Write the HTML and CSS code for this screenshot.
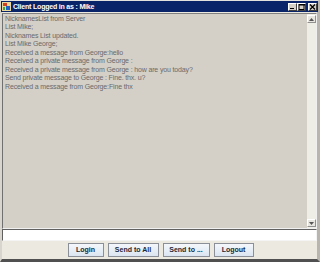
FILE: index.html
```html
<!DOCTYPE html>
<html>
<head>
<meta charset="utf-8">
<link rel="stylesheet" href="styles.css">
</head>
<body>
<div class="window">
  <div class="titlebar">
    <span class="app-icon">
      <svg width="9" height="9" viewBox="0 0 9 9"><rect x="0" y="0" width="9" height="9" fill="#e8d8a0"/><rect x="1" y="1" width="4" height="3" fill="#d04020"/><rect x="4" y="4" width="4" height="4" fill="#2060c0"/><rect x="1" y="5" width="2" height="3" fill="#40a040"/></svg>
    </span>
    <span class="title">Client Logged in as : Mike</span>
    <span class="controls">
      <span class="ctl"><svg width="7" height="6" viewBox="0 0 7 6"><rect x="1" y="4" width="4" height="1" fill="#000"/></svg></span>
      <span class="ctl"><svg width="7" height="6" viewBox="0 0 7 6"><rect x="1" y="0.5" width="5" height="5" fill="none" stroke="#000" stroke-width="1"/><rect x="1" y="0" width="6" height="1.5" fill="#000"/></svg></span>
      <span class="ctl close"><svg width="7" height="6" viewBox="0 0 7 6"><path d="M1 0.5 L6 5.5 M6 0.5 L1 5.5" stroke="#000" stroke-width="1.3"/></svg></span>
    </span>
  </div>
  <div class="scrollpane">
    <div class="log">
      <div>NicknamesList from Server</div>
      <div>List Mike;</div>
      <div>Nicknames List updated.</div>
      <div>List Mike George;</div>
      <div>Received a message from George:hello</div>
      <div>Received a private message from George :</div>
      <div>Received a private message from George : how are you today?</div>
      <div>Send private message to George : Fine. thx. u?</div>
      <div>Received a message from George:Fine thx</div>
    </div>
    <div class="vscroll">
      <span class="arrow"><svg width="5" height="3" viewBox="0 0 5 3"><path d="M0 3 L2.5 0 L5 3 Z" fill="#555"/></svg></span>
      <span class="track"></span>
      <span class="arrow"><svg width="5" height="3" viewBox="0 0 5 3"><path d="M0 0 L2.5 3 L5 0 Z" fill="#555"/></svg></span>
    </div>
  </div>
  <div class="input"></div>
  <div class="buttons">
    <button class="btn b-login">Login</button>
    <button class="btn b-all">Send to All</button>
    <button class="btn b-to">Send to ...</button>
    <button class="btn b-out">Logout</button>
  </div>
</div>
</body>
</html>
```
FILE: styles.css
```css
html, body {
  margin: 0;
  padding: 0;
  background: #d4d0c8;
}
.window {
  width: 320px;
  height: 262px;
  box-sizing: border-box;
  display: flex;
  flex-direction: column;
  background: #ece9e1;
  border-top: 1px solid #e4e2dc;
  border-left: 2px solid #d8d5ce;
  border-right: 3px solid #b8b5ae;
  border-bottom: 3px solid #505050;
  font-family: "Liberation Sans", Arial, sans-serif;
}
.titlebar {
  height: 11px;
  background: #0a246a;
  display: flex;
  align-items: center;
  padding-left: 1px;
  margin-left: -1px;
  margin-right: -1px;
  flex-shrink: 0;
}
.app-icon {
  width: 9px;
  height: 9px;
  display: flex;
  margin-right: 2px;
}
.title {
  color: #fff;
  font-weight: bold;
  font-size: 7px;
  letter-spacing: -0.2px;
  flex: 1;
  line-height: 11px;
}
.controls {
  display: flex;
  gap: 0;
  margin-right: 1px;
}
.ctl {
  width: 7px;
  height: 6px;
  background: #d4d0c8;
  border: 1px solid;
  border-color: #fff #404040 #404040 #fff;
  display: flex;
}
.ctl.close {
  margin-left: 2px;
}
.scrollpane {
  margin-top: 1px;
  height: 216px;
  flex-shrink: 0;
  display: flex;
  border: 1px solid;
  border-color: #808080 #f0f0f0 #f0f0f0 #707070;
  box-sizing: border-box;
  background: #d4d0c8;
}
.log {
  flex: 1;
  padding: 1px 0 0 2px;
  color: #6a6a6a;
  font-size: 7px;
  line-height: 8.45px;
  letter-spacing: -0.15px;
  white-space: nowrap;
  overflow: hidden;
}
.vscroll {
  width: 9px;
  display: flex;
  flex-direction: column;
  background: #eeede6;
  padding: 1px 0;
}
.arrow {
  width: 7px;
  height: 6px;
  background: #e8e6e0;
  border: 1px solid;
  border-color: #fff #909090 #909090 #fff;
  display: flex;
  align-items: center;
  justify-content: center;
}
.track {
  flex: 1;
}
.input {
  height: 12px;
  flex-shrink: 0;
  box-sizing: border-box;
  background: #fff;
  border: 1px solid;
  border-color: #606060 #f4f4f4 #f4f4f4 #606060;
}
.buttons {
  flex: 1;
  display: flex;
  justify-content: center;
  align-items: center;
  gap: 4px;
  padding-left: 2px;
  background: #ece9e1;
}
.btn {
  height: 14px;
  padding: 0;
  margin: 0;
  box-sizing: border-box;
  border: 1px solid #8a8f98;
  background: linear-gradient(#f4f7fb, #dbe5f1);
  color: #1c2838;
  font-family: "Liberation Sans", Arial, sans-serif;
  font-weight: bold;
  font-size: 7px;
  line-height: 12px;
}
.b-login { width: 36px; }
.b-all { width: 51px; }
.b-to { width: 47px; }
.b-out { width: 40px; }
```
